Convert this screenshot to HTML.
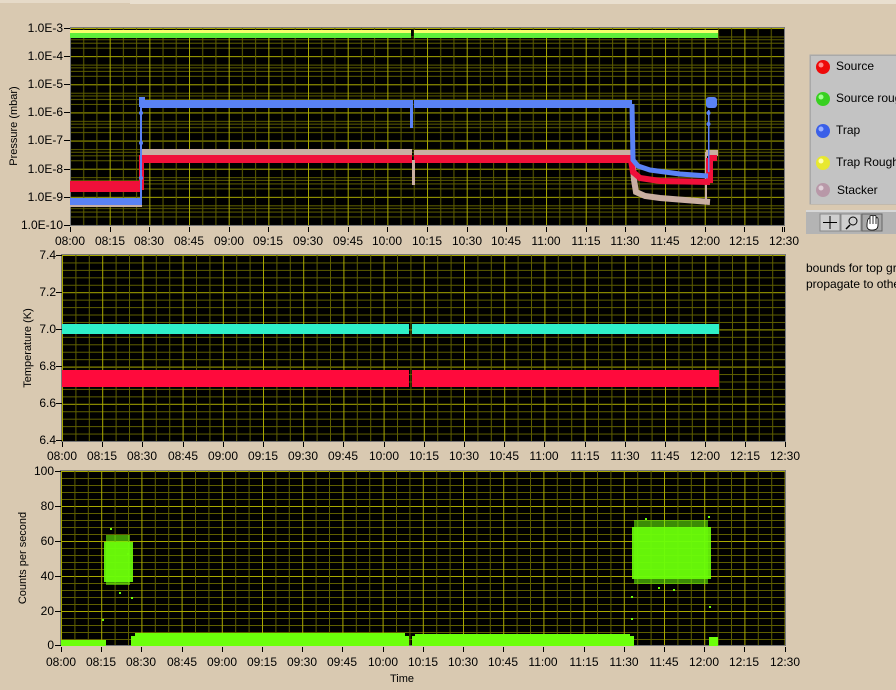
<!DOCTYPE html>
<html><head><meta charset="utf-8"><style>
html,body{margin:0;padding:0;background:#d9c9b1;width:896px;height:690px;overflow:hidden;font-family:"Liberation Sans",sans-serif}
svg{position:absolute;left:0;top:0}
text{font-family:"Liberation Sans",sans-serif;font-size:12px;fill:#000}
</style></head><body>
<svg width="896" height="690" viewBox="0 0 896 690">
<defs>
<pattern id="vt" patternUnits="userSpaceOnUse" x="70" y="0" width="39.67" height="10"><rect x="13.2" width="1" height="10" fill="#5e5e00"/><rect x="26.4" width="1" height="10" fill="#5e5e00"/><rect x="0" width="1" height="10" fill="#a8a800"/></pattern>
<pattern id="ht" patternUnits="userSpaceOnUse" x="0" y="28" width="10" height="28.14">
<rect y="19.67" width="10" height="1" fill="#5e5e00"/><rect y="14.71" width="10" height="1" fill="#5e5e00"/><rect y="11.2" width="10" height="1" fill="#5e5e00"/><rect y="8.47" width="10" height="1" fill="#5e5e00"/><rect y="0" width="10" height="1" fill="#a8a800"/></pattern>
<pattern id="vm" patternUnits="userSpaceOnUse" x="62" y="0" width="40.2" height="10"><rect x="13.4" width="1" height="10" fill="#5e5e00"/><rect x="26.8" width="1" height="10" fill="#5e5e00"/><rect x="0" width="1" height="10" fill="#a8a800"/></pattern>
<pattern id="hm" patternUnits="userSpaceOnUse" x="0" y="255" width="10" height="37.2"><rect y="7.44" width="10" height="1" fill="#5e5e00"/><rect y="14.88" width="10" height="1" fill="#5e5e00"/><rect y="22.32" width="10" height="1" fill="#5e5e00"/><rect y="29.76" width="10" height="1" fill="#5e5e00"/><rect y="0" width="10" height="1" fill="#a8a800"/></pattern>
<pattern id="vb" patternUnits="userSpaceOnUse" x="61" y="0" width="40.2" height="10"><rect x="13.4" width="1" height="10" fill="#5e5e00"/><rect x="26.8" width="1" height="10" fill="#5e5e00"/><rect x="0" width="1" height="10" fill="#a8a800"/></pattern>
<pattern id="hb" patternUnits="userSpaceOnUse" x="0" y="471" width="10" height="35"><rect y="7" width="10" height="1" fill="#5e5e00"/><rect y="14" width="10" height="1" fill="#5e5e00"/><rect y="21" width="10" height="1" fill="#5e5e00"/><rect y="28" width="10" height="1" fill="#5e5e00"/><rect y="0" width="10" height="1" fill="#a8a800"/></pattern>
</defs>
<rect x="0" y="0" width="896" height="3" fill="#e6dac8"/>
<rect x="130" y="0" width="766" height="4" fill="#e9dfcf"/>

<!-- TOP PLOT -->
<rect x="70" y="28" width="714" height="198" fill="#000"/>
<rect x="70" y="28" width="714" height="198" fill="url(#ht)"/>
<rect x="70" y="28" width="714" height="198" fill="url(#vt)"/>
<rect x="70.5" y="27.5" width="714" height="198" fill="none" stroke="#777" stroke-width="1"/>
<rect x="70" y="30" width="341" height="4" fill="#f6ff6a"/><rect x="414" y="30" width="304" height="4" fill="#f6ff6a"/>
<rect x="70" y="33" width="341" height="5" fill="#5fef3a"/><rect x="414" y="33" width="304" height="5" fill="#5fef3a"/>
<rect x="70" y="201" width="72" height="6" fill="#c9aea2"/>
<rect x="140" y="149" width="272" height="7" fill="#c9aea2"/>
<rect x="414" y="150" width="218" height="7" fill="#c9aea2"/>
<polyline points="632,155 634,180 636,192 645,196 660,198 710,202" fill="none" stroke="#c9aea2" stroke-width="6"/>
<rect x="706" y="150" width="12" height="6" fill="#c9aea2"/>
<rect x="705" y="152" width="2" height="50" fill="#c9aea2"/>
<rect x="70" y="181" width="72" height="11" fill="#f0103a"/>
<rect x="139" y="155" width="273" height="8" fill="#f0103a"/>
<rect x="139" y="160" width="5" height="30" fill="#f0103a"/>
<rect x="414" y="155" width="218" height="8" fill="#f0103a"/>
<polyline points="631,160 633,172 640,178 660,181 710,182" fill="none" stroke="#f0103a" stroke-width="6"/>
<rect x="706" y="158" width="7" height="25" fill="#f0103a"/>
<rect x="709" y="155" width="8" height="6" fill="#f0103a"/>
<rect x="412" y="160" width="3" height="25" fill="#c9aea2"/>
<rect x="70" y="198" width="72" height="7" fill="#5a82f5"/>
<rect x="140" y="103" width="2" height="97" fill="#5a82f5"/>
<circle cx="141" cy="113" r="2" fill="#5a82f5"/><circle cx="141" cy="143" r="2" fill="#5a82f5"/><circle cx="141" cy="178" r="2" fill="#5a82f5"/>
<rect x="139" y="97" width="6" height="10" fill="#5a82f5"/>
<rect x="140" y="100" width="272" height="8" fill="#5a82f5"/>
<rect x="410" y="100" width="3" height="28" fill="#5a82f5"/>
<rect x="414" y="100" width="218" height="8" fill="#5a82f5"/>
<polyline points="632,104 633,160 638,166 650,170 680,174 708,176" fill="none" stroke="#5a82f5" stroke-width="5"/>
<rect x="708" y="110" width="1.5" height="62" fill="#5a82f5"/>
<rect x="706" y="97" width="11" height="11" rx="3" fill="#5a82f5"/>
<circle cx="708.5" cy="113" r="2" fill="#5a82f5"/><circle cx="708.5" cy="124" r="2" fill="#5a82f5"/>
<g fill="#000">
<rect x="64" y="28" width="6" height="1"/><rect x="64" y="56" width="6" height="1"/><rect x="64" y="84" width="6" height="1"/><rect x="64" y="112" width="6" height="1"/><rect x="64" y="140" width="6" height="1"/><rect x="64" y="169" width="6" height="1"/><rect x="64" y="197" width="6" height="1"/><rect x="64" y="225" width="6" height="1"/>
</g>
<g text-anchor="end">
<text x="63" y="32">1.0E-3</text><text x="63" y="60">1.0E-4</text><text x="63" y="88">1.0E-5</text><text x="63" y="116">1.0E-6</text><text x="63" y="144">1.0E-7</text><text x="63" y="173">1.0E-8</text><text x="63" y="201">1.0E-9</text><text x="63" y="229">1.0E-10</text>
</g>
<text transform="translate(17,126) rotate(-90)" text-anchor="middle" style="font-size:11px">Pressure (mbar)</text>
<g text-anchor="middle">
<text x="70" y="245">08:00</text><text x="110" y="245">08:15</text><text x="149" y="245">08:30</text><text x="189" y="245">08:45</text><text x="229" y="245">09:00</text><text x="268" y="245">09:15</text><text x="308" y="245">09:30</text><text x="348" y="245">09:45</text><text x="387" y="245">10:00</text><text x="427" y="245">10:15</text><text x="467" y="245">10:30</text><text x="506" y="245">10:45</text><text x="546" y="245">11:00</text><text x="586" y="245">11:15</text><text x="625" y="245">11:30</text><text x="665" y="245">11:45</text><text x="705" y="245">12:00</text><text x="744" y="245">12:15</text><text x="784" y="245">12:30</text>
</g>
<g fill="#000"><rect x="70" y="227" width="1" height="5"/><rect x="110" y="227" width="1" height="5"/><rect x="149" y="227" width="1" height="5"/><rect x="189" y="227" width="1" height="5"/><rect x="229" y="227" width="1" height="5"/><rect x="268" y="227" width="1" height="5"/><rect x="308" y="227" width="1" height="5"/><rect x="348" y="227" width="1" height="5"/><rect x="387" y="227" width="1" height="5"/><rect x="427" y="227" width="1" height="5"/><rect x="467" y="227" width="1" height="5"/><rect x="506" y="227" width="1" height="5"/><rect x="546" y="227" width="1" height="5"/><rect x="586" y="227" width="1" height="5"/><rect x="625" y="227" width="1" height="5"/><rect x="665" y="227" width="1" height="5"/><rect x="705" y="227" width="1" height="5"/><rect x="744" y="227" width="1" height="5"/><rect x="782" y="227" width="1" height="5"/><rect x="784" y="227" width="1" height="5"/></g>

<!-- MIDDLE PLOT -->
<rect x="62" y="255" width="724" height="186" fill="#000"/>
<rect x="62" y="255" width="724" height="186" fill="url(#hm)"/>
<rect x="62" y="255" width="724" height="186" fill="url(#vm)"/>
<rect x="61.5" y="254.5" width="724" height="187" fill="none" stroke="#777"/>
<rect x="62" y="324" width="347" height="10" fill="#2ff0c8"/><rect x="412" y="324" width="307" height="10" fill="#2ff0c8"/>
<rect x="62" y="370" width="347" height="17" fill="#ff0a3c"/><rect x="412" y="370" width="307" height="17" fill="#ff0a3c"/>
<g fill="#000"><rect x="56" y="255" width="6" height="1"/><rect x="56" y="292" width="6" height="1"/><rect x="56" y="329" width="6" height="1"/><rect x="56" y="366" width="6" height="1"/><rect x="56" y="403" width="6" height="1"/><rect x="56" y="440" width="6" height="1"/></g>
<g text-anchor="end"><text x="56" y="259">7.4</text><text x="56" y="296">7.2</text><text x="56" y="333">7.0</text><text x="56" y="370">6.8</text><text x="56" y="407">6.6</text><text x="56" y="444">6.4</text></g>
<text transform="translate(31,348) rotate(-90)" text-anchor="middle" style="font-size:11px">Temperature (K)</text>
<g text-anchor="middle">
<text x="62" y="460">08:00</text><text x="102" y="460">08:15</text><text x="142" y="460">08:30</text><text x="183" y="460">08:45</text><text x="223" y="460">09:00</text><text x="263" y="460">09:15</text><text x="303" y="460">09:30</text><text x="343" y="460">09:45</text><text x="384" y="460">10:00</text><text x="424" y="460">10:15</text><text x="464" y="460">10:30</text><text x="504" y="460">10:45</text><text x="544" y="460">11:00</text><text x="585" y="460">11:15</text><text x="625" y="460">11:30</text><text x="665" y="460">11:45</text><text x="705" y="460">12:00</text><text x="745" y="460">12:15</text><text x="785" y="460">12:30</text>
</g>
<g fill="#000"><rect x="62" y="442" width="1" height="5"/><rect x="102" y="442" width="1" height="5"/><rect x="142" y="442" width="1" height="5"/><rect x="183" y="442" width="1" height="5"/><rect x="223" y="442" width="1" height="5"/><rect x="263" y="442" width="1" height="5"/><rect x="303" y="442" width="1" height="5"/><rect x="343" y="442" width="1" height="5"/><rect x="384" y="442" width="1" height="5"/><rect x="424" y="442" width="1" height="5"/><rect x="464" y="442" width="1" height="5"/><rect x="504" y="442" width="1" height="5"/><rect x="544" y="442" width="1" height="5"/><rect x="585" y="442" width="1" height="5"/><rect x="625" y="442" width="1" height="5"/><rect x="665" y="442" width="1" height="5"/><rect x="705" y="442" width="1" height="5"/><rect x="745" y="442" width="1" height="5"/><rect x="785" y="442" width="1" height="5"/></g>

<!-- BOTTOM PLOT -->
<rect x="61" y="471" width="725" height="175" fill="#000"/>
<rect x="61" y="471" width="725" height="175" fill="url(#hb)"/>
<rect x="61" y="471" width="725" height="175" fill="url(#vb)"/>
<rect x="60.5" y="470.5" width="725" height="175" fill="none" stroke="#777"/>
<g fill="#6cff0a">
<rect x="61" y="640" width="45" height="6"/>
<rect x="131" y="636" width="278" height="10"/><rect x="412" y="636" width="222" height="10"/>
<rect x="135" y="633" width="270" height="4"/><rect x="415" y="634" width="215" height="3"/>
<rect x="104" y="542" width="29" height="40" opacity="0.9"/>
<rect x="106" y="535" width="24" height="50" opacity="0.6"/>
<rect x="632" y="527" width="79" height="52" opacity="0.9"/>
<rect x="634" y="520" width="74" height="64" opacity="0.55"/>
<rect x="709" y="637" width="9" height="9"/>
<rect x="110" y="528" width="2" height="2"/><rect x="127" y="553" width="2" height="2"/><rect x="102" y="619" width="2" height="2"/><rect x="131" y="597" width="2" height="2"/><rect x="119" y="592" width="2" height="2"/>
<rect x="631" y="596" width="2" height="2"/><rect x="631" y="618" width="2" height="2"/><rect x="709" y="606" width="2" height="2"/><rect x="708" y="516" width="2" height="2"/><rect x="645" y="518" width="2" height="2"/><rect x="658" y="587" width="2" height="2"/><rect x="673" y="589" width="2" height="2"/>
</g>
<g fill="#000"><rect x="55" y="471" width="6" height="1"/><rect x="55" y="506" width="6" height="1"/><rect x="55" y="541" width="6" height="1"/><rect x="55" y="576" width="6" height="1"/><rect x="55" y="611" width="6" height="1"/><rect x="55" y="645" width="6" height="1"/></g>
<g text-anchor="end"><text x="54" y="475">100</text><text x="54" y="510">80</text><text x="54" y="545">60</text><text x="54" y="580">40</text><text x="54" y="615">20</text><text x="54" y="649">0</text></g>
<text transform="translate(26,558) rotate(-90)" text-anchor="middle" style="font-size:11px">Counts per second</text>
<g text-anchor="middle">
<text x="61" y="666">08:00</text><text x="101" y="666">08:15</text><text x="141" y="666">08:30</text><text x="182" y="666">08:45</text><text x="222" y="666">09:00</text><text x="262" y="666">09:15</text><text x="302" y="666">09:30</text><text x="342" y="666">09:45</text><text x="383" y="666">10:00</text><text x="423" y="666">10:15</text><text x="463" y="666">10:30</text><text x="503" y="666">10:45</text><text x="543" y="666">11:00</text><text x="584" y="666">11:15</text><text x="624" y="666">11:30</text><text x="664" y="666">11:45</text><text x="704" y="666">12:00</text><text x="744" y="666">12:15</text><text x="785" y="666">12:30</text>
<text x="402" y="682" style="font-size:11px">Time</text>
</g>
<g fill="#000"><rect x="61" y="647" width="1" height="5"/><rect x="101" y="647" width="1" height="5"/><rect x="141" y="647" width="1" height="5"/><rect x="182" y="647" width="1" height="5"/><rect x="222" y="647" width="1" height="5"/><rect x="262" y="647" width="1" height="5"/><rect x="302" y="647" width="1" height="5"/><rect x="342" y="647" width="1" height="5"/><rect x="383" y="647" width="1" height="5"/><rect x="423" y="647" width="1" height="5"/><rect x="463" y="647" width="1" height="5"/><rect x="503" y="647" width="1" height="5"/><rect x="543" y="647" width="1" height="5"/><rect x="584" y="647" width="1" height="5"/><rect x="624" y="647" width="1" height="5"/><rect x="664" y="647" width="1" height="5"/><rect x="704" y="647" width="1" height="5"/><rect x="744" y="647" width="1" height="5"/><rect x="785" y="647" width="1" height="5"/></g>

<!-- LEGEND -->
<rect x="809.5" y="54.5" width="90" height="150" fill="#a9a9a9"/>
<rect x="811" y="56" width="90" height="148" fill="#c3c3c3"/>
<g>
<circle cx="823" cy="67" r="7" fill="#ee0a0a"/><circle cx="821" cy="65" r="2.5" fill="#ff8a8a"/>
<circle cx="823" cy="99" r="7" fill="#38d020"/><circle cx="821" cy="97" r="2.5" fill="#a0ff90"/>
<circle cx="823" cy="131" r="7" fill="#3a5fe8"/><circle cx="821" cy="129" r="2.5" fill="#9ab0ff"/>
<circle cx="823" cy="163" r="7" fill="#e8e830"/><circle cx="821" cy="161" r="2.5" fill="#ffffb0"/>
<circle cx="823" cy="190" r="7" fill="#b898a8"/><circle cx="821" cy="188" r="2.5" fill="#e0d0d8"/>
</g>
<text x="836" y="70">Source</text><text x="836" y="102">Source rough</text><text x="836" y="134">Trap</text><text x="836" y="166">Trap Rough</text><text x="837" y="194">Stacker</text>
<rect x="806" y="210" width="90" height="24" fill="#b4b4b4"/>
<rect x="806" y="210" width="90" height="2" fill="#d8d8d8"/>
<rect x="820" y="214" width="20" height="17" fill="#cfcfcf" stroke="#888"/>
<rect x="841" y="214" width="20" height="17" fill="#cfcfcf" stroke="#888"/>
<rect x="862" y="214" width="20" height="17" fill="#a8a8a8" stroke="#666"/>
<path d="M823 222.5h14M830 216v13" stroke="#000" stroke-width="1"/>
<circle cx="853" cy="221" r="4" fill="none" stroke="#000"/><path d="M850 225l-4 4" stroke="#000" stroke-width="1.5"/>
<path d="M867 226 q0-8 3-8 v6 v-8 q2-1 3 0 v8 v-8 q2-1 3 0 v8 v-6 q2-1 2 1 v6 q0 5-5 5 h-2 q-3 0-4-3z" fill="#fff" stroke="#000" stroke-width="0.8"/>
<text x="806" y="272">bounds for top graph</text>
<text x="806" y="288">propagate to others</text>
</svg>
</body></html>
